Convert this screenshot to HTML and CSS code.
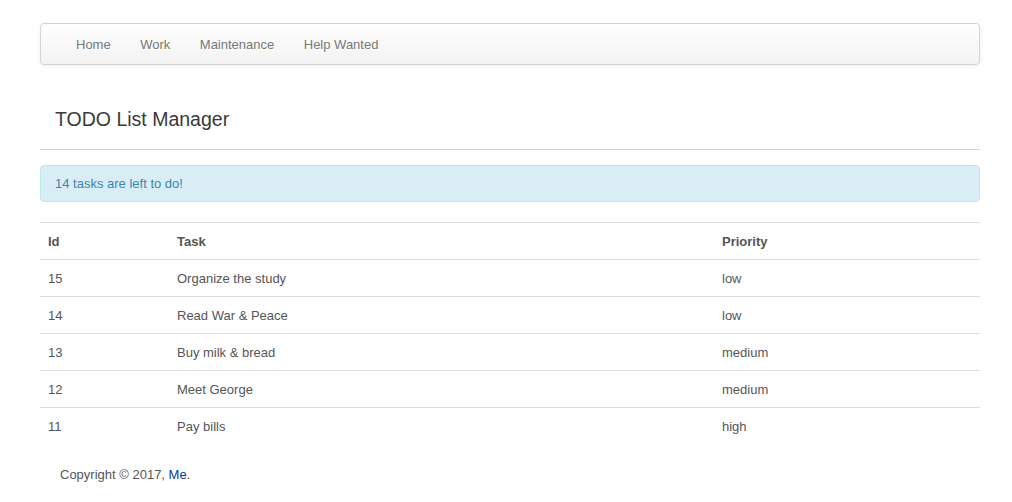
FILE: index.html
```html
<!DOCTYPE html>
<html>
<head>
<meta charset="utf-8">
<title>TODO List Manager</title>
<link rel="stylesheet" href="styles.css">
</head>
<body>
<div class="container">
  <nav class="navbar">
    <ul class="nav">
      <li><a href="#">Home</a></li>
      <li><a href="#">Work</a></li>
      <li><a href="#">Maintenance</a></li>
      <li><a href="#">Help Wanted</a></li>
    </ul>
  </nav>
  <div class="page-header">
    <h1>TODO List Manager</h1>
  </div>
  <div class="alert">14 tasks are left to do!</div>
  <table class="table">
    <thead>
      <tr><th class="col-id">Id</th><th class="col-task">Task</th><th>Priority</th></tr>
    </thead>
    <tbody>
      <tr><td>15</td><td>Organize the study</td><td>low</td></tr>
      <tr><td>14</td><td>Read War &amp; Peace</td><td>low</td></tr>
      <tr><td>13</td><td>Buy milk &amp; bread</td><td>medium</td></tr>
      <tr><td>12</td><td>Meet George</td><td>medium</td></tr>
      <tr><td>11</td><td>Pay bills</td><td>high</td></tr>
    </tbody>
  </table>
  <footer class="footer">Copyright © 2017, <a href="#">Me</a>.</footer>
</div>
</body>
</html>
```
FILE: styles.css
```css
html, body {
  margin: 0;
  padding: 0;
  background: #fff;
}
body {
  font-family: "Liberation Sans", Arial, sans-serif;
  font-size: 13px;
  line-height: 20px;
  color: #555;
  padding-top: 23px;
}
.container {
  width: 940px;
  margin: 0 32px 0 40px;
}
.navbar {
  height: 40px;
  padding: 0 20px;
  border: 1px solid #d4d4d4;
  border-radius: 4px;
  background: linear-gradient(to bottom, #ffffff, #f2f2f2);
  box-shadow: 0 1px 4px rgba(0,0,0,0.065);
}
.nav {
  list-style: none;
  margin: 0;
  padding: 0;
  display: flex;
}
.nav a {
  display: block;
  padding: 11px 15px 9px;
  margin-right: -0.5px;
  color: #777;
  text-decoration: none;
  text-shadow: 0 1px 0 #fff;
}
.page-header {
  margin-top: 39px;
  padding: 0 15px 15px;
  border-bottom: 1px solid #d5d5d5;
}
.page-header h1 {
  margin: 0;
  font-size: 19.5px;
  line-height: 30px;
  font-weight: normal;
  color: #3a3a3a;
}
.alert {
  margin-top: 15px;
  padding: 8px 14px;
  line-height: 19px;
  background: #d9edf7;
  border: 1px solid #bce8f1;
  border-radius: 4px;
  color: #3a87ad;
}
.table {
  margin-top: 20px;
  width: 100%;
  border-collapse: collapse;
  border-spacing: 0;
}
.table th, .table td {
  text-align: left;
  padding: 9px 8px 7px;
  line-height: 20px;
  border-top: 1px solid #ddd;
  vertical-align: top;
}
.table th {
  font-weight: bold;
  color: #555;
}
.col-id { width: 113px; }
.col-task { width: 529px; }
.footer {
  margin-top: 21px;
  padding: 0 20px;
  line-height: 20px;
}
.footer a {
  color: #0b3aa3;
  text-decoration: none;
}
```
